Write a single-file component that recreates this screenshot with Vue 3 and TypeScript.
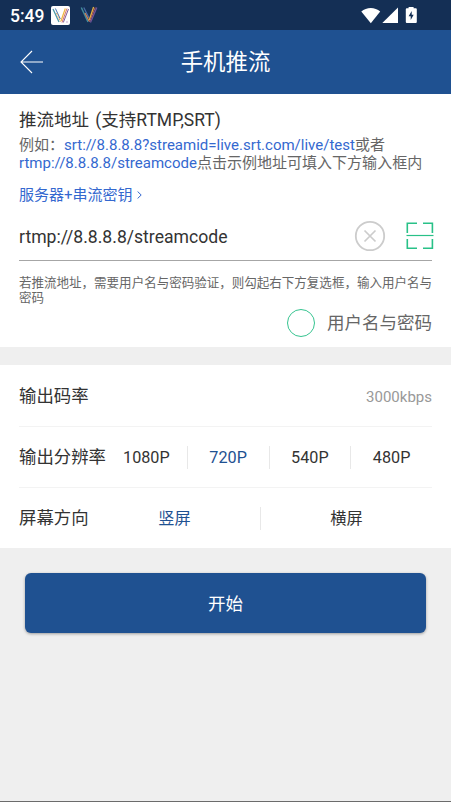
<script setup lang="ts">
import { ref } from 'vue'

const srtExample = 'srt://8.8.8.8?streamid=live.srt.com/live/test'
const rtmpExample = 'rtmp://8.8.8.8/streamcode'
const address = ref<string>(rtmpExample)
const useAuth = ref<boolean>(false)
const resolutions: string[] = ['1080P', '720P', '540P', '480P']
const resolution = ref<string>('720P')
const orientations: string[] = ['竖屏', '横屏']
const orientation = ref<string>('竖屏')
</script>

<template>
  <div class="screen">
    <div class="status">
      <span class="clock">5:49</span>
      <svg class="app-icon" width="19" height="19" viewBox="0 0 19 19" fill="none">
        <rect width="19" height="19" rx="2" fill="#fff" />
        <path d="M2 3L8 16" stroke="#4d9aa8" stroke-width="1.3" />
        <path d="M4.4 2.5L9.3 13" stroke="#4472ad" stroke-width="1" />
        <path d="M5.5 7L9.5 16" stroke="#e6a55e" stroke-width="1" stroke-dasharray="2 1" />
        <path d="M10 15L14.3 2.5" stroke="#efb83e" stroke-width="1.2" />
        <path d="M11 16.5L16 2.5" stroke="#d36458" stroke-width=".9" />
        <path d="M12.3 16.5L17.5 3" stroke="#7e5a9c" stroke-width="1" />
        <path d="M15 16h2" stroke="#c9a8d4" />
      </svg>
      <svg class="v-icon" width="18" height="18" viewBox="0 0 18 18" fill="none">
        <path d="M1.3 1.5L8 16" stroke="#438c9c" stroke-width="1.5" />
        <path d="M3.8 1.5L9 12" stroke="#4d70aa" stroke-width="1.2" />
        <path d="M5 7L9 15" stroke="#d68758" stroke-width="1.2" />
        <path d="M9.3 14L13.6 1" stroke="#e8b241" stroke-width="1.3" />
        <path d="M9.5 16L15.2 1.5" stroke="#c96259" stroke-width="1" />
        <path d="M10.5 16.5L16.8 1.5" stroke="#70559b" stroke-width="1.3" />
      </svg>
      <svg class="signals" width="56" height="18" viewBox="0 0 56 18" fill="#fff">
        <path d="M.3 4.6C5.5-.1 14-.1 19.2 4.6L9.8 16.2z" />
        <path d="M37 .4V16H21.3z" />
        <path d="M47.6 1.3V0h5v1.3h2.2q1 0 1 1V15q0 1-1 1h-9q-1 0-1-1V2.3q0-1 1-1z" />
        <path d="M50.7 4L47.6 9.2h2.1V13l3-5.2h-2z" fill="#142f55" />
      </svg>
    </div>

    <header class="header">
      <svg class="back" width="24" height="24" viewBox="0 0 24 24" fill="none" stroke="#fff" stroke-width="1.1">
        <path d="M12 1L1 12L12 23M1 12H23" />
      </svg>
      <h1>手机推流</h1>
    </header>

    <section class="card address-card">
      <div class="heading">推流地址 (支持RTMP,SRT)</div>
      <p class="example">
        例如：<a @click="address = srtExample">{{ srtExample }}</a>或者<br />
        <a @click="address = rtmpExample">{{ rtmpExample }}</a>点击示例地址可填入下方输入框内
      </p>
      <div class="key-link">
        <span>服务器+串流密钥</span>
        <svg width="5" height="8" viewBox="0 0 5 8" fill="none" stroke="#3468cf" stroke-width="1">
          <path d="M.6.5L4.2 4L.6 7.5" />
        </svg>
      </div>
      <div class="field">
        <input v-model="address" type="text" spellcheck="false" />
        <svg class="clear" width="32" height="32" viewBox="0 0 32 32" fill="none" stroke="#ccc" @click="address = ''">
          <circle cx="16" cy="16" r="14.2" stroke-width="1.8" />
          <path d="M10.5 10.5l11 11M21.5 10.5l-11 11" stroke-width="1.7" />
        </svg>
        <svg class="scan" width="28" height="28" viewBox="0 0 28 28" fill="none" stroke="#29c188" stroke-width="1.6">
          <path d="M1.3 11V1.3H11M17 1.3h9.4V11M1.3 17v9.2H11M17 26.2h9.4V17" />
          <path d="M.5 13.5h27" stroke-width="1.2" />
        </svg>
      </div>
      <p class="hint">若推流地址，需要用户名与密码验证，则勾起右下方复选框，输入用户名与<br />密码</p>
      <div class="auth" @click="useAuth = !useAuth">
        <span class="check" :class="{ checked: useAuth }"></span>
        <span>用户名与密码</span>
      </div>
    </section>

    <section class="card settings">
      <div class="row">
        <span class="label">输出码率</span>
        <span class="bitrate">3000kbps</span>
      </div>
      <div class="row">
        <span class="label wide">输出分辨率</span>
        <div class="options">
          <span
            v-for="r in resolutions"
            :key="r"
            class="option"
            :class="{ active: r === resolution }"
            @click="resolution = r"
          >{{ r }}</span>
        </div>
      </div>
      <div class="row">
        <span class="label">屏幕方向</span>
        <div class="options">
          <span
            v-for="o in orientations"
            :key="o"
            class="option"
            :class="{ active: o === orientation }"
            @click="orientation = o"
          >{{ o }}</span>
        </div>
      </div>
    </section>

    <button class="start">开始</button>
    <div class="bottom-line"></div>
  </div>
</template>

<style>
body {
  margin: 0;
  background: #efefef;
}
</style>

<style scoped>
.screen {
  box-sizing: border-box;
  width: 100%;
  height: 802px;
  display: flex;
  flex-direction: column;
  overflow: hidden;
  background: #efefef;
  color: #333;
  font-family: Roboto, "Noto Sans CJK SC", sans-serif;
}
.status {
  height: 30px;
  flex: none;
  display: flex;
  align-items: center;
  padding: 0 35px 0 10px;
  background: #142f55;
}
.clock {
  width: 41px;
  color: #fff;
  font-size: 17.5px;
  font-weight: 500;
  line-height: 30px;
  padding-top: 1px;
}
.v-icon {
  margin-left: 10px;
}
.signals {
  margin-top: 1px;
  margin-left: auto;
  margin-right: -1px;
}
.header {
  height: 64px;
  flex: none;
  display: grid;
  grid-template-columns: 60px 1fr 60px;
  align-items: center;
  background: #1f5191;
}
.back {
  margin-left: 20px;
  margin-top: -1px;
}
h1 {
  margin: 0;
  color: #fff;
  font-size: 22.4px;
  font-weight: 400;
  line-height: 32px;
  text-align: center;
}
.card {
  flex: none;
  box-sizing: border-box;
  padding: 0 19px;
  background: #fff;
}
.address-card {
  height: 253px;
  padding-top: 15px;
}
.heading {
  font-size: 17.5px;
  line-height: 22px;
  word-spacing: 2px;
}
.example {
  margin: 0;
  padding-top: 5px;
  color: #666;
  font-size: 15.03px;
  line-height: 18px;
  white-space: nowrap;
}
.example a {
  color: #3468cf;
}
.key-link {
  display: flex;
  align-items: center;
  gap: 4px;
  margin-top: 14px;
  color: #3468cf;
  font-size: 15px;
  line-height: 18px;
}
.field {
  display: flex;
  align-items: center;
  height: 48px;
  padding-top: 8px;
  border-bottom: 1px solid #a6a6a6;
}
.field input {
  flex: 1;
  min-width: 0;
  padding: 2px 0 0;
  border: 0;
  outline: 0;
  background: none;
  color: #333;
  font: inherit;
  font-size: 17.6px;
}
.clear {
  margin-right: 20px;
}
.scan {
  margin-right: -2px;
}
.hint {
  margin: 14px 0 0;
  color: #666;
  font-size: 12.52px;
  line-height: 15px;
  white-space: nowrap;
}
.auth {
  display: flex;
  align-items: center;
  justify-content: flex-end;
  gap: 12px;
  margin-top: 4px;
  color: #666;
  font-size: 17.5px;
  line-height: 28px;
}
.check {
  box-sizing: border-box;
  width: 28px;
  height: 28px;
  border: 1.5px solid #36c490;
  border-radius: 50%;
}
.check.checked {
  background: #36c490;
}
.settings {
  height: 183px;
  margin-top: 18px;
}
.row {
  box-sizing: border-box;
  height: 61px;
  display: flex;
  align-items: center;
}
.row + .row {
  border-top: 1px solid #f3f3f3;
}
.label {
  width: 70px;
  flex: none;
  font-size: 17.4px;
  line-height: 24px;
  white-space: nowrap;
}
.label.wide {
  width: 87px;
}
.bitrate {
  margin-left: auto;
  color: #999;
  font-size: 15px;
  line-height: 20px;
  padding-top: 2px;
}
.options {
  flex: 1;
  display: flex;
}
.option {
  flex: 1;
  box-sizing: border-box;
  font-size: 16.2px;
  line-height: 23px;
  text-align: center;
}
.option + .option {
  border-left: 1px solid #e8e8e8;
}
.option.active {
  color: #1f5191;
}
.start {
  flex: none;
  height: 60px;
  margin: 25px 25px 0;
  padding: 0 0 2px;
  border: 0;
  border-radius: 6px;
  background: #1f5191;
  box-shadow: 0 1px 3px rgba(0, 0, 0, 0.35);
  color: #fff;
  font: inherit;
  font-size: 17.5px;
}
.bottom-line {
  height: 1px;
  margin-top: auto;
  background: #6b6b6b;
}
</style>
